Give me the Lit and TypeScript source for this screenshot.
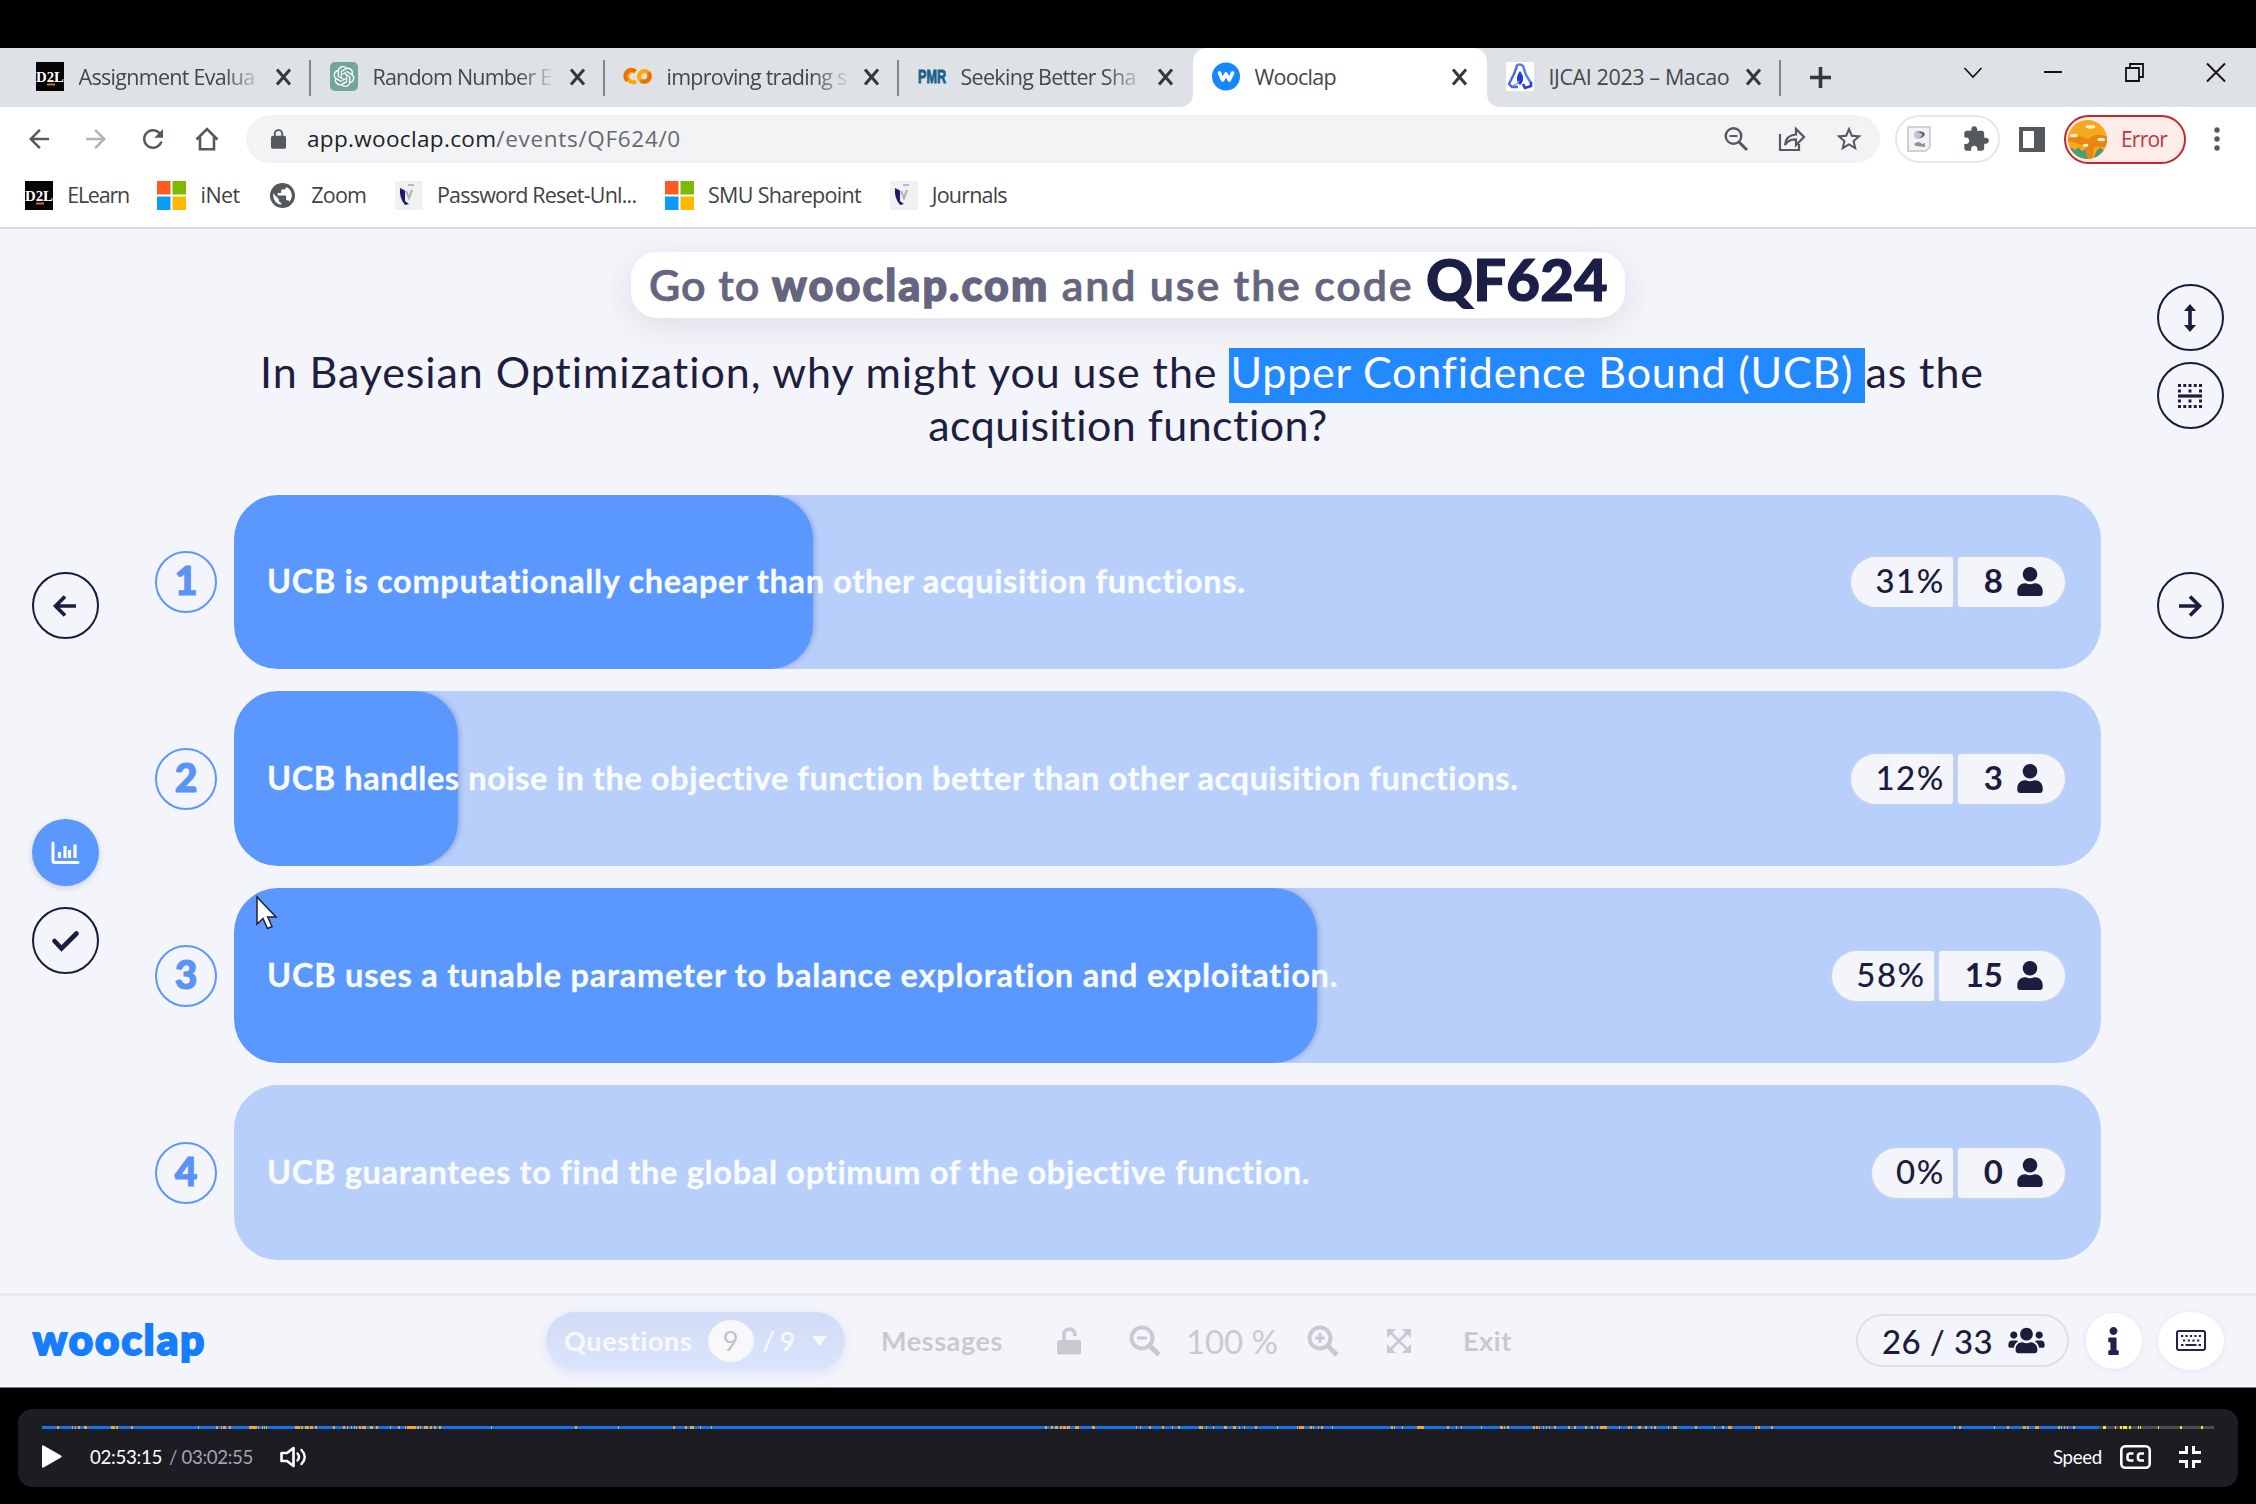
import { LitElement, html, css, svg } from "lit";
import { customElement } from "lit/decorators.js";
import { styleMap } from "lit/directives/style-map.js";

/* A label with its own letter tracking in px. */
const t = (text: string, tracking = 0, cls = "") => html`<span
    class="t ${cls}"
    style=${styleMap({ letterSpacing: `${tracking}px` })}
    >${text}</span
  >`;

const icon = (w: number, h: number, box: string, body: unknown) =>
  html`<svg class="icon" width=${w} height=${h} viewBox=${box}>${body}</svg>`;

const p = (d: string) => svg`<path fill="currentColor" d=${d}></path>`;

const line = (d: string, w: number) =>
  svg`<path fill="none" stroke="currentColor" stroke-width=${w} d=${d}></path>`;

const d2l = icon(28, 29, "0 0 28 29", svg`
  <rect width="28" height="29" fill="#050505"></rect>
  <text x="14" y="20" text-anchor="middle" font-family="Liberation Serif, serif" font-weight="700" font-size="15" textLength="28" lengthAdjust="spacingAndGlyphs" fill="#fff">D2L</text>
  <rect x="11" y="21.500" width="8" height="2" fill="#d9701f"></rect>`);

const knot = icon(28, 29, "0 0 28 29", svg`
  <rect width="28" height="29" rx="5" fill="#74a59c"></rect>
  <g transform="translate(3.500 4) scale(.875)" fill="#fff"><path d="M22.2819 9.8211a5.9847 5.9847 0 0 0-.5157-4.9108 6.0462 6.0462 0 0 0-6.5098-2.9A6.0651 6.0651 0 0 0 4.9807 4.1818a5.9847 5.9847 0 0 0-3.9977 2.9 6.0462 6.0462 0 0 0 .7427 7.0966 5.98 5.98 0 0 0 .511 4.9107 6.051 6.051 0 0 0 6.5146 2.9001A5.9847 5.9847 0 0 0 13.2599 24a6.0557 6.0557 0 0 0 5.7718-4.2058 5.9894 5.9894 0 0 0 3.9977-2.9001 6.0557 6.0557 0 0 0-.7475-7.0729zm-9.022 12.6081a4.4755 4.4755 0 0 1-2.8764-1.0408l.1419-.0804 4.7783-2.7582a.7948.7948 0 0 0 .3927-.6813v-6.7369l2.02 1.1686a.071.071 0 0 1 .038.052v5.5826a4.504 4.504 0 0 1-4.4945 4.4944zm-9.6607-4.1254a4.4708 4.4708 0 0 1-.5346-3.0137l.142.0852 4.783 2.7582a.7712.7712 0 0 0 .7806 0l5.8428-3.3685v2.3324a.0804.0804 0 0 1-.0332.0615L9.74 19.9502a4.4992 4.4992 0 0 1-6.1408-1.6464zM2.3408 7.8956a4.485 4.485 0 0 1 2.3655-1.9728V11.6a.7664.7664 0 0 0 .3879.6765l5.8144 3.3543-2.0201 1.1685a.0757.0757 0 0 1-.071 0l-4.8303-2.7865A4.504 4.504 0 0 1 2.3408 7.872zm16.5963 3.8558L13.1038 8.364 15.1192 7.2a.0757.0757 0 0 1 .071 0l4.8303 2.7913a4.4944 4.4944 0 0 1-.6765 8.1042v-5.6772a.79.79 0 0 0-.407-.667zm2.0107-3.0231l-.142-.0852-4.7735-2.7818a.7759.7759 0 0 0-.7854 0L9.409 9.2297V6.8974a.0662.0662 0 0 1 .0284-.0615l4.8303-2.7866a4.4992 4.4992 0 0 1 6.6802 4.66zM8.3065 12.863l-2.02-1.1638a.0804.0804 0 0 1-.038-.0567V6.0742a4.4992 4.4992 0 0 1 7.3757-3.4537l-.142.0805L8.704 5.459a.7948.7948 0 0 0-.3927.6813zm1.0976-2.3654l2.602-1.4998 2.6069 1.4998v2.9994l-2.5974 1.4997-2.6067-1.4997Z"></path></g>`);

const rings = icon(28, 29, "0 0 28 29", svg`
  <g fill="none" stroke-width="4.200">
    <circle cx="20.500" cy="14.500" r="5.400" stroke="#f9ab00"></circle>
    <path d="M12 9.800A5.600 5.600 0 1 0 12 19.200" stroke="#f9ab00"></path>
    <path d="M11.200 9.300A5.600 5.600 0 0 0 3.600 18.500" stroke="#e8710a"></path>
    <path d="M16.700 18.300A5.400 5.400 0 0 0 24.300 10.700" stroke="#e8710a"></path>
  </g>`);

const pmr = icon(28, 29, "0 0 28 29", svg`
  <text x="0" y="21" font-family="Liberation Sans, sans-serif" font-weight="700" font-size="18" textLength="28" lengthAdjust="spacingAndGlyphs" fill="#15608a" stroke="#15608a" stroke-width=".8">PMR</text>`);

const woo = icon(28, 29, "0 0 28 29", svg`
  <circle cx="14" cy="14.500" r="14" fill="#1687ff"></circle>
  <path d="M7.500 11l3.200 7 3.300-6 3.300 6 3.200-7" fill="none" stroke="#fff" stroke-width="3.600" stroke-linecap="round" stroke-linejoin="round"></path>`);

const ijcai = icon(28, 29, "0 0 28 29", svg`
  <rect width="28" height="29" fill="#fff"></rect>
  <path d="M11 4l-3 8-5 10 3 3h6" fill="none" stroke="#4a67e8" stroke-width="2.400"></path>
  <path d="M10 4q4-3 7 0l3 9 5 8" fill="none" stroke="#5b7bf0" stroke-width="2.400"></path>
  <path d="M25 20v4l-6 2-2-4" fill="none" stroke="#2440d8" stroke-width="2.600"></path>
  <path d="M14 9q5 6 2 12l-2 2-2-2q-3-6 2-12z" fill="#1a3fe0"></path>
  <path d="M6 24q5-1 7-5" fill="none" stroke="#7e95f3" stroke-width="1.600"></path>`);

const ms = icon(29, 29, "0 0 29 29", svg`
  <rect width="13.500" height="13.500" fill="#ff5a22"></rect>
  <rect x="15.500" width="13.500" height="13.500" fill="#7db900"></rect>
  <rect y="15.500" width="13.500" height="13.500" fill="#0b9cf5"></rect>
  <rect x="15.500" y="15.500" width="13.500" height="13.500" fill="#ffb800"></rect>`);

const globe = icon(29, 29, "0 0 24 24", svg`<g color="#55585c">${p("M12 2C6.48 2 2 6.48 2 12s4.480 10 10 10 10-4.480 10-10S17.520 2 12 2zm-1 17.930c-3.950-.49-7-3.850-7-7.930 0-.62.08-1.210.21-1.790L9 15v1c0 1.100.9 2 2 2v1.930zm6.900-2.540c-.26-.81-1-1.390-1.900-1.390h-1v-3c0-.55-.45-1-1-1H8v-2h2c.55 0 1-.45 1-1V7h2c1.100 0 2-.9 2-2v-.41c2.930 1.190 5 4.060 5 7.410 0 2.080-.8 3.970-2.100 5.390z")}${line("M12 3a9 9 0 1 0 .01 0", 2.6)}</g>`);

const crest = icon(28, 29, "0 0 28 29", svg`
  <rect width="28" height="29" fill="#f1f1f4"></rect>
  <path d="M5 7l5 2.500V20l4 3-4 1Q4 17 5 7z" fill="#1c1c6b"></path>
  <path d="M11 10l3 7 3-8" fill="none" stroke="#b4b4be" stroke-width="2.200"></path>
  <path d="M13 4h6" stroke="#b9b9c2" stroke-width="2"></path>`);

const tabs = [
  { icon: d2l, title: "Assignment Evalua", ls: -0.7 },
  { icon: knot, title: "Random Number E", ls: -0.8 },
  { icon: rings, title: "improving trading s", ls: -0.76 },
  { icon: pmr, title: "Seeking Better Sha", ls: -0.7 },
  { icon: woo, title: "Wooclap", ls: -0.75, active: true },
  { icon: ijcai, title: "IJCAI 2023 – Macao", ls: -0.4 },
];

const bookmarks = [
  { icon: d2l, title: "ELearn", ls: -1.25 },
  { icon: ms, title: "iNet", ls: -0.59 },
  { icon: globe, title: "Zoom", ls: -0.77 },
  { icon: crest, title: "Password Reset-Unl...", ls: -0.79 },
  { icon: ms, title: "SMU Sharepoint", ls: -0.68 },
  { icon: crest, title: "Journals", ls: -0.81 },
];

const answers = [
  { text: "UCB is computationally cheaper than other acquisition functions.", pct: 31, votes: 8, ls: 0.67 },
  { text: "UCB handles noise in the objective function better than other acquisition functions.", pct: 12, votes: 3, ls: 0.59 },
  { text: "UCB uses a tunable parameter to balance exploration and exploitation.", pct: 58, votes: 15, ls: 0.79 },
  { text: "UCB guarantees to find the global optimum of the objective function.", pct: 0, votes: 0, ls: 0.69 },
];

/* Timeline marks: [offset from the bar's start, width]. */
const marks: [number, number][] = [
  [15, 2], [30, 1], [33, 1], [35.500, 2], [42, 3], [69, 4], [74, 1.500], [89, 1.500], [156, 1], [174, 1.500], [179, 1], [181, 2.500], [187, 1.500],
  [207, 8], [216, 1], [220, 1], [222, 1], [224, 1], [253, 5], [259, 2], [263, 3.500], [268, 3], [273, 2], [291, 2], [301, 2], [305, 1], [309, 1], [311.500, 1.500], [314, 1],
  [317, 1.500], [320, 4], [328, 2.500], [334, 2], [348, 1], [356, 2], [363, 1], [365, 9], [375, 2], [378, 1], [382, 4], [388, 2], [392, 2], [397, 2],
  [449, 1], [533, 2], [576, 1], [631, 2], [643, 2], [648, 4], [658, 1], [669, 1],
  [1003, 2], [1009, 2], [1013, 3], [1018, 2], [1021, 3], [1025, 3], [1033, 4], [1050, 3], [1094, 1], [1098, 1], [1107, 2], [1120, 2], [1130, 1], [1136, 2], [1157, 4], [1164, 1], [1171, 1], [1182, 3], [1191, 3], [1197, 1], [1202, 1], [1213, 2], [1235, 1], [1255, 1], [1257, 5], [1268, 2], [1271, 1], [1276, 1], [1279, 2], [1290, 1],
  [1349, 2], [1352, 1], [1360, 1], [1375, 7], [1405, 2], [1414, 1], [1419, 1], [1439, 1], [1458, 3], [1462, 1], [1465, 2], [1491, 2], [1494, 2], [1497, 1], [1501, 1], [1504, 1], [1507, 1], [1512, 2],
  [1526, 2], [1532, 2], [1543, 2], [1549, 1.500], [1555, 1], [1558, 7], [1577, 1], [1586, 1.500], [1588.500, 1.500], [1596, 3], [1603, 2], [1609, 1], [1612, 2], [1626, 1], [1631, 3.500], [1653, 2], [1672, 1], [1680, 1.500], [1686, 4],
  [1713, 2], [1716, 2], [1729, 2], [1912, 1], [1917, 2], [1952, 1], [1965, 2], [1981, 3], [1985, 2], [1993, 4], [2016, 2], [2019, 1], [2022, 1], [2025, 1], [2031, 2],
];
const ahead: [number, number][] = [
  [2061, 3], [2073, 1], [2078, 2], [2081, 4], [2087, 2], [2096, 1], [2098, 1], [2116, 1], [2138, 2], [2159, 2],
];

@customElement("app-root")
export class AppRoot extends LitElement {
  static styles = css`
    :host { display: block; width: 2256px; height: 1504px; background: #000; overflow: hidden; padding-top: 48px; box-sizing: border-box; font-family: Lato, "Liberation Sans", sans-serif; color: #1b1c3e; }
    * { box-sizing: border-box; }
    .icon { display: block; flex: none; overflow: visible; }
    .t { white-space: pre; display: inline-block; }
    .screen { height: 1340px; background: #f4f5fa; border-bottom: 1px solid #77807b; }
    .browser { height: 181px; background: #fff; border-bottom: 2px solid #d9dbdf; font-family: "Open Sans", "Noto Sans", sans-serif; font-size: 21.5px; color: #44474b; }
    .tabs { height: 59px; background: #dee1e6; padding-left: 17px; display: flex; }
    .tab { width: 294px; height: 59px; padding: 0 19.5px 2px 18.5px; display: flex; align-items: center; position: relative; }
    .title { width: 182px; margin-left: 15px; margin-right: 15px; white-space: nowrap; line-height: 40px; mask-image: linear-gradient(to right, #000 80%, transparent 101%); }
    .plain .title { mask-image: none; }
    .tab.sep::after { content: ""; position: absolute; right: 0; top: 12px; width: 2px; height: 36px; background: #84878c; }
    .active { background: #fff; border-radius: 14px 14px 0 0; color: #44474b; }
    .active::before, .active::after { content: ""; position: absolute; bottom: 0; width: 12px; height: 12px; }
    .tab.active::before { left: -12px; background: radial-gradient(circle at 0 0, transparent 11.5px, #fff 12px); }
    .tab.active::after { right: -12px; background: radial-gradient(circle at 100% 0, transparent 11.5px, #fff 12px); }
    .x { color: #34373b; }
    .plus { margin: 19px 0 0 29px; color: #34373b; }
    .win { display: flex; align-items: center; height: 48px; margin-left: auto; color: #111; padding-right: 30px; gap: 62.4px; }
    .tools { height: 64px; display: flex; align-items: center; color: #55585c; padding-left: 24px; }
    .tools > .icon { margin-right: 27px; }
    .address { width: 1634px; height: 48px; border-radius: 24px; background: #f1f3f4; display: flex; align-items: center; padding: 0 16px 0 25px; font-size: 22.5px; }
    .address .url { margin-left: 21px; flex: 1; display: flex; line-height: 40px; }
    .address .host { color: #202226; }
    .address .path { color: #67696d; }
    .address .end { display: flex; gap: 28px; align-items: center; }
    .ext { margin-left: 15px; width: 105px; height: 48px; border: 2px solid #e6e7ea; border-radius: 24px; display: flex; align-items: center; justify-content: space-between; padding: 0 8px 0 10px; }
    .tools > .panel { margin-right: 19px; margin-left: 19px; }
    .error { width: 122px; height: 49px; border: 2px solid #c5282c; background: #fdecea; border-radius: 25px; display: flex; align-items: center; color: #c1353c; gap: 14px; padding-left: 2px; line-height: 40px; font-size: 21px; }
    .tools > .dots { margin: 0 0 0 28px; }
    .marks { display: flex; padding-left: 25px; height: 48px; align-items: center; gap: 28.5px; }
    .mark { display: flex; align-items: center; gap: 14.2px; line-height: 40px; color: #3f4246; }

    .stage { height: 1064px; display: grid; grid-template-columns: 132px 1992px 132px; }
    .side { display: flex; flex-direction: column; align-items: center; }
    .left { padding-top: 343px; padding-right: 2px; }
    .right { padding-top: 55px; }
    .round { width: 67px; height: 67px; flex: none; border: 2.5px solid #191b3b; border-radius: 50%; display: flex; align-items: center; justify-content: center; }
    .stats { margin-top: 180px; margin-bottom: 21px; border: none; background: #5a97ff; color: #fff; box-shadow: 0 2px 6px rgba(40, 60, 110, 0.2); }
    .rows { margin-top: 11px; margin-bottom: 143px; }
    .middle { display: flex; flex-direction: column; align-items: center; }
    .join { margin-top: 23px; width: 994px; height: 66px; line-height: 65px; padding-left: 18px; border-radius: 26px; background: #fff; box-shadow: 0 8px 34px rgba(50, 50, 80, 0.11); font-size: 43px; font-weight: 600; color: #65657f; white-space: nowrap; -webkit-text-stroke: 0.7px #65657f; }
    .join .site { font-weight: 900; -webkit-text-stroke: 1.4px #65657f; }
    .join .code { font-size: 58px; line-height: 0; font-weight: 900; color: #1b1f48; -webkit-text-stroke: 1.2px #1b1f48; }
    .question { margin-top: 27px; height: 106px; font-size: 43px; line-height: 53px; text-align: center; white-space: nowrap; color: #1d1e40; }
    .question .first { margin-right: 12px; }
    .hl { color: #fff; background: linear-gradient(#2389ff, #2389ff) bottom / 100% 55px no-repeat; padding: 0 12px 6px 1px; letter-spacing: 0.82px; }
    .answers { margin-top: 43.5px; align-self: stretch; padding: 0 23px; display: flex; flex-direction: column; gap: 22.4px; }
    .answer { display: flex; align-items: center; gap: 17px; }
    .num { width: 62px; height: 62px; border: 2px solid #5a97ff; border-radius: 50%; color: #5a93f5; font-weight: 900; font-size: 39px; line-height: 55px; text-align: center; flex: none; -webkit-text-stroke: 1.2px #5a93f5; }
    .bar { width: 1867px; height: 174.6px; border-radius: 44px; background: #b8cffc; overflow: hidden; display: grid; }
    .bar > * { grid-area: 1 / 1; }
    .fill { background: #5a97ff; border-radius: 44px; box-shadow: 2px 0 5px rgba(60, 90, 150, 0.3); }
    .body { z-index: 1; display: flex; align-items: center; justify-content: space-between; padding: 0 36px 0 33px; font-size: 32.5px; font-weight: 700; color: #f8fcff; -webkit-text-stroke: 0.3px #f8fcff; }
    .body > .t { margin-top: -3px; }
    .chips { display: flex; gap: 5px; color: #1b1c3e; line-height: 47px; font-size: 33px; -webkit-text-stroke: 0; }
    .chip { height: 50px; background: #f4f5fa; box-shadow: 0 0 3px rgba(230, 220, 210, 0.8); display: flex; align-items: center; }
    .pct { border-radius: 25px 3px 3px 25px; padding: 0 8px 3px 24px; font-weight: 500; }
    .cnt { border-radius: 3px 25px 25px 3px; padding: 0 22px 0 26px; gap: 14px; font-weight: 700; }
    .cnt .t { margin-top: -3px; }

    .footer { height: 94px; border-top: 3px solid #e9eaee; padding: 0 32px 2px 33px; display: flex; align-items: center; color: #c9cad1; font-weight: 700; font-size: 27px; }
    .logo { color: #167dff; font-size: 42px; font-weight: 900; width: 172px; line-height: 50px; margin-top: -4px; -webkit-text-stroke: 2.2px #167dff; stroke-linejoin: round; }
    .footer .questions { margin-left: 341px; width: 299px; height: 58px; border-radius: 29px; background: linear-gradient(#d3dcf6, #dae4fc); box-shadow: 0 3px 12px rgba(170, 195, 250, 0.35); color: #f7f9ff; display: flex; align-items: center; padding-left: 18px; }
    .badge { width: 46px; height: 42px; border-radius: 50%; background: #f8f8fa; color: #c2c3c9; font-weight: 400; text-align: center; line-height: 41px; margin: 0 9px 0 15px; }
    .total { font-weight: 500; }
    .caret { margin-left: 17px; }
    .g { flex: none; display: flex; }
    .messages { margin-left: 36px; }
    .lock { margin-left: 54px; }
    .minus { margin-left: 48px; }
    .zoomed { margin-left: 25px; font-weight: 400; font-size: 33px; }
    .more { margin-left: 29px; }
    .expand { margin-left: 48px; }
    .exit { margin-left: 52px; }
    .people { margin-left: auto; width: 213px; height: 53px; border: 2px solid #dfe0e5; border-radius: 27px; color: #1b1c3e; font-weight: 500; font-size: 33px; display: flex; align-items: center; gap: 15px; padding-left: 24px; line-height: 46px; }
    .dot { width: 56px; height: 56px; border-radius: 50%; background: #fff; color: #20234b; display: flex; align-items: center; justify-content: center; margin-left: 16.5px; box-shadow: 0 1px 6px rgba(60, 70, 90, 0.09); }
    .wide { width: 66px; height: 58px; margin-left: 16.5px; }

    .player { margin: 21px 18px 0; height: 78px; border-radius: 14px; background: #1c1c22; padding: 17px 24px 0; color: #fff; font-size: 18.7px; }
    .track { position: relative; height: 3px; background: #4b4b52; }
    .played { height: 3px; width: 2057px; background: #1472ea; }
    .mk { position: absolute; top: 0; height: 3px; background: #f5a52a; }
    .mk.next { background: #f4ee14; }
    .controls { display: flex; align-items: center; height: 55px; padding-right: 13px; }
    .now { margin-left: 28px; }
    .dim { color: #a5a3b5; margin-left: 7px; }
    .speaker { margin-left: 27px; }
    .speed { margin-left: auto; }
    .cc { margin-left: 18px; }
    .shrink { margin-left: 28px; }
    .cursor { position: absolute; left: 256px; top: 896px; }
  `;

  private tab(x: (typeof tabs)[number], i: number) {
    const sep = i !== 3 && i !== 4;
    return html`<div class="tab ${x.active ? "active" : ""} ${sep ? "sep" : ""} ${i > 3 ? "plain" : ""}">
      ${x.icon}
      <div class="title">${t(x.title, x.ls)}</div>
      <span class="x">${icon(15, 18, "0 0 15 18", line("M1 1.500l13 15M14 1.500L1 16.500", 3))}</span>
    </div>`;
  }

  render() {
    return html`
      <div class="screen">
        <div class="browser">
          <div class="tabs">
            ${tabs.map((x, i) => this.tab(x, i))}
            <span class="plus">${icon(21, 21, "0 0 21 21", line("M10.500 0v21M0 10.500h21", 3.600))}</span>
            <div class="win">
              ${icon(18, 11, "0 0 18 11", line("M.5 1L9 10l8.500-9", 1.600))}
              ${icon(18, 2, "0 0 18 2", line("M0 1h18", 2))}
              ${icon(19, 19, "0 0 19 19", line("M1 5h13v13H1zM5 5V1h13v13h-4", 1.800))}
              ${icon(20, 19, "0 0 20 19", line("M1 .5l18 18M19 .5l-18 18", 1.800))}
            </div>
          </div>
          <div class="tools">
            ${icon(30, 30, "0 0 24 24", p("M20 11H7.830l5.590-5.590L12 4l-8 8 8 8 1.410-1.410L7.830 13H20v-2z"))}
            <svg class="icon" width="30" height="30" viewBox="0 0 24 24" opacity=".45"><path fill="currentColor" d="M4 11h12.170l-5.590-5.590L12 4l8 8-8 8-1.410-1.410L16.170 13H4z"></path></svg>
            ${icon(30, 30, "0 0 24 24", p("M17.650 6.350C16.200 4.900 14.210 4 12 4c-4.420 0-7.990 3.580-7.990 8s3.570 8 7.990 8c3.730 0 6.840-2.550 7.730-6h-2.080c-.82 2.330-3.040 4-5.650 4-3.310 0-6-2.690-6-6s2.690-6 6-6c1.660 0 3.140.69 4.220 1.780L13 11h7V4l-2.350 2.350z"))}
            ${icon(24, 24, "0 0 24 24", line("M1.500 12.500L12 2l10.500 10.500M5 10v12.300h14V10", 2.600))}
            <div class="address">
              ${icon(15, 20, "4 1 16 21", svg`${p("M6 8h12q2 0 2 2v10q0 2-2 2H6q-2 0-2-2V10q0-2 2-2z")}${line("M8 9V6a4 4 0 0 1 8 0v3", 2)}`)}
              <div class="url">${t("app.wooclap.com", 0.34, "host")}${t("/events/QF624/0", 0.68, "path")}</div>
              <div class="end">
                ${icon(28, 28, "0 0 28 28", svg`<circle cx="11.500" cy="11" r="7.800" fill="none" stroke="currentColor" stroke-width="2.400"></circle>${line("M17 17l8 8", 3)}${line("M7.500 11h8", 2)}`)}
                ${icon(28, 28, "0 0 28 28", svg`${line("M2 9v16h19v-6", 2.200)}${line("M7 20q1-10 11-10.500V4l8 8-8 8v-5.500q-7-.5-11 5.500z", 2.200)}`)}
                ${icon(30, 30, "0 0 24 24", p("M22 9.240l-7.190-.62L12 2 9.190 8.630 2 9.240l5.460 4.730L5.820 21 12 17.270 18.180 21l-1.630-7.030L22 9.240zM12 15.400l-3.760 2.270 1-4.280-3.320-2.880 4.380-.38L12 6.100l1.710 4.040 4.380.38-3.320 2.880 1 4.280L12 15.400z"))}
              </div>
            </div>
            <div class="ext">
              ${icon(24, 26, "0 0 24 26", svg`<path d="M1 1h22v20l-4 4H1z" fill="#f3f3f6" stroke="#c4c5cc" stroke-width="1.500"></path><circle cx="11" cy="9" r="4" fill="#c3c4d0"></circle><path d="M10 6q6-2 8 2-1 4-6 4 4-2 3-4-2-2-5-2z" fill="#5f6072"></path><path d="M7 18q5-4 8 0l3-1v4l-9-1z" fill="#8f90a0"></path>`)}
              ${icon(28, 28, "0 0 24 24", p("M20.500 11H19V7c0-1.100-.9-2-2-2h-4V3.500C13 2.120 11.880 1 10.500 1S8 2.120 8 3.500V5H4c-1.100 0-1.990.9-1.990 2v3.800H3.500c1.490 0 2.700 1.210 2.700 2.700s-1.210 2.700-2.700 2.700H2V20c0 1.100.9 2 2 2h3.800v-1.500c0-1.490 1.210-2.700 2.700-2.700 1.490 0 2.700 1.210 2.700 2.700V22H17c1.100 0 2-.9 2-2v-4h1.500c1.380 0 2.500-1.120 2.500-2.500S21.880 11 20.500 11z"))}
            </div>
            <svg class="icon panel" width="26" height="25" viewBox="0 0 26 25"><path fill="currentColor" fill-rule="evenodd" d="M0 0h26v25H0zM4 4h11v17H4z"></path></svg>
            <div class="error">
              ${icon(39, 39, "0 0 40 40", svg`
                <clipPath id="av"><circle cx="20" cy="20" r="20"></circle></clipPath>
                <g clip-path="url(#av)"><rect width="40" height="40" fill="#f8a81b"></rect>
                <path d="M0 19q12-5 20 1 9-8 20-3v11q-8-1-13 0l-2 12h-9l2-12Q8 22 0 22z" fill="#e88613"></path>
                <path d="M0 31l4-3 3 3 4-3 3 4 4-2 2 10H0zM40 29l-4 2-3-3-4 4-3 8h14z" fill="#4c9e78"></path>
                <ellipse cx="23" cy="7" rx="5" ry="2" fill="#fff0cf"></ellipse><ellipse cx="6" cy="16" rx="4" ry="1.800" fill="#fff0cf"></ellipse><ellipse cx="34" cy="20" rx="4" ry="1.800" fill="#fff0cf"></ellipse><ellipse cx="18" cy="26" rx="3" ry="1.600" fill="#fff0cf"></ellipse></g>`)}
              ${t("Error", -0.81)}
            </div>
            <svg class="icon dots" width="6" height="24" viewBox="0 0 6 24"><g fill="currentColor"><circle cx="3" cy="3" r="2.700"></circle><circle cx="3" cy="12" r="2.700"></circle><circle cx="3" cy="21" r="2.700"></circle></g></svg>
          </div>
          <div class="marks">${bookmarks.map((b) => html`<div class="mark">${b.icon}${t(b.title, b.ls)}</div>`)}</div>
        </div>

        <div class="stage">
          <div class="side left">
            <div class="round">${icon(24, 22, "0 0 24 22", line("M12 1.500L2.500 11l9.500 9.500M2.500 11H23", 3.600))}</div>
            <div class="round stats">${icon(28, 22, "0 0 28 22", svg`<path d="M2 1v18q0 1.500 1.500 1.500H27" fill="none" stroke="#fff" stroke-width="3" stroke-linecap="round"></path><path d="M8.500 10v6M14 4v12M18.500 8v8M24 2.500v13.500" stroke="#fff" stroke-width="3.200"></path>`)}</div>
            <div class="round">${icon(27, 20, "0 0 27 20", svg`<path d="M2.500 10l7 7.500L24.500 2.500" fill="none" stroke="currentColor" stroke-width="4.600" stroke-linecap="round"></path>`)}</div>
          </div>
          <div class="middle">
            <div class="join">${t("Go to ", 0.98)}${t("wooclap.com", 2.1, "site")}${t(" and use the code ", 1.83)}${t("QF624", 0.2, "code")}</div>
            <div class="question">
              <div class="first">${t("In Bayesian Optimization, why might you use the ", 0.92)}<span class="hl">Upper Confidence Bound (UCB)</span>${t("as the", 0.9)}</div>
              <div>${t("acquisition function?", 0.45)}</div>
            </div>
            <div class="answers">
              ${answers.map(
                (a, i) => html`<div class="answer">
                  <div class="num">${i + 1}</div>
                  <div class="bar">
                    <div class="fill" style=${styleMap({ width: `${a.pct}%` })}></div>
                    <div class="body">
                      ${t(a.text, a.ls)}
                      <div class="chips">
                        <div class="chip pct">${t(`${a.pct}%`, 1.5)}</div>
                        <div class="chip cnt">${t(`${a.votes}`)}${icon(26, 29, "0 0 448 512", p("M224 256c70.700 0 128-57.300 128-128S294.700 0 224 0 96 57.300 96 128s57.300 128 128 128zm89.600 32h-16.700c-22.200 10.200-46.900 16-72.900 16s-50.600-5.800-72.900-16h-16.700C60.200 288 0 348.200 0 422.400V464c0 26.500 21.500 48 48 48h352c26.500 0 48-21.500 48-48v-41.600c0-74.200-60.200-134.400-134.400-134.400z"))}</div>
                      </div>
                    </div>
                  </div>
                </div>`
              )}
            </div>
          </div>
          <div class="side right">
            <div class="round">${icon(14, 28, "0 0 14 28", svg`${line("M7 5v18", 3.600)}${p("M7 0l6 7H1zM7 28l-6-7h12z")}`)}</div>
            <div class="round rows">${icon(24, 24, "0 0 24 24", svg`<path d="M0 1.500h24M0 22.500h24" stroke="currentColor" stroke-width="3" stroke-dasharray="3 2.250"></path><path d="M0 7h3M10.500 7h3M21 7h3M0 17h3M10.500 17h3M21 17h3" stroke="currentColor" stroke-width="3"></path><path d="M0 12h24" stroke="currentColor" stroke-width="3.200"></path>`)}</div>
            <div class="round">${icon(24, 22, "0 0 24 22", line("M12 1.500l9.500 9.500-9.500 9.500M21.500 11H1", 3.600))}</div>
          </div>
        </div>

        <div class="footer">
          <div class="logo">${t("wooclap", 2.1)}</div>
          <div class="questions">${t("Questions", 0.65)}<span class="badge">9</span>${t("/ 9", -0.93, "total")}<span class="caret">${icon(15, 10, "0 0 15 10", p("M0 0h15L7.500 10z"))}</span></div>
          <span class="g messages">${t("Messages", 0.59)}</span>
          <span class="g lock">${icon(24, 28, "0 0 24 28", svg`<rect y="13" width="24" height="14.500" rx="2.500" fill="currentColor"></rect>${line("M7 14V7.500a5 5 0 0 1 11 0V9", 3.600)}`)}</span>
          <span class="g minus">${icon(32, 32, "0 0 32 32", svg`<circle cx="13" cy="13" r="10.500" fill="none" stroke="currentColor" stroke-width="4"></circle>${line("M20.500 20.500l9.500 9.500", 5)}${line("M8 13h10", 3)}`)}</span>
          <span class="g zoomed">${t("100 %", -0.07)}</span>
          <span class="g more">${icon(32, 32, "0 0 32 32", svg`<circle cx="13" cy="13" r="10.500" fill="none" stroke="currentColor" stroke-width="4"></circle>${line("M20.500 20.500l9.500 9.500", 5)}${line("M8 13h10M13 8v10", 3)}`)}</span>
          <span class="g expand">${icon(24, 24, "0 0 24 24", svg`${line("M4 4l16 16M20 4L4 20", 2.800)}${p("M0 0h9L0 9zM24 0v9l-9-9zM0 24v-9l9 9zM24 24h-9l9-9z")}`)}</span>
          <span class="g exit">${t("Exit", 0.62)}</span>
          <div class="people">${t("26 / 33", 0.39)}${icon(37, 29, "0 0 640 512", p("M96 224c35.300 0 64-28.700 64-64s-28.700-64-64-64-64 28.700-64 64 28.700 64 64 64zm448 0c35.300 0 64-28.700 64-64s-28.700-64-64-64-64 28.700-64 64 28.700 64 64 64zm32 32h-64c-17.600 0-33.500 7.100-45.100 18.600 40.300 22.100 68.900 62 75.100 109.400h66c17.700 0 32-14.300 32-32v-32c0-35.300-28.700-64-64-64zm-256 0c61.900 0 112-50.100 112-112S381.900 32 320 32 208 82.100 208 144s50.100 112 112 112zm76.800 32h-8.300c-20.800 10-43.900 16-68.500 16s-47.600-6-68.500-16h-8.300C179.600 288 128 339.600 128 403.200V432c0 26.500 21.500 48 48 48h288c26.500 0 48-21.500 48-48v-28.800c0-63.600-51.600-115.200-115.200-115.200zm-223.700-13.400C161.500 263.100 145.600 256 128 256H64c-35.300 0-64 28.700-64 64v32c0 17.700 14.300 32 32 32h65.900c6.300-47.400 34.900-87.300 75.200-109.400z"))}</div>
          <div class="dot">${icon(11, 28, "0 0 192 512", p("M20 424.229h20V279.771H20c-11.046 0-20-8.954-20-20V212c0-11.046 8.954-20 20-20h112c11.046 0 20 8.954 20 20v212.229h20c11.046 0 20 8.954 20 20V492c0 11.046-8.954 20-20 20H20c-11.046 0-20-8.954-20-20v-47.771c0-11.046 8.954-20 20-20zM96 0C56.235 0 24 32.235 24 72s32.235 72 72 72 72-32.235 72-72S135.764 0 96 0z"))}</div>
          <div class="dot wide">${icon(30, 21, "0 0 30 21", svg`<rect x="1" y="1" width="28" height="19" rx="2" fill="none" stroke="currentColor" stroke-width="2"></rect><path d="M5 6h20" stroke="currentColor" stroke-width="2.200" stroke-dasharray="2.200 2.250"></path><path d="M7 10.500h17" stroke="currentColor" stroke-width="2.200" stroke-dasharray="2.200 2.500"></path><path d="M5 15h2.500M9.500 15h11M22.500 15H25" stroke="currentColor" stroke-width="2.200"></path>`)}</div>
        </div>
      </div>

      <div class="player">
        <div class="track">
          <div class="played"></div>
          ${marks.map(([x, w]) => html`<i class="mk" style=${styleMap({ left: `${x}px`, width: `${w}px` })}></i>`)}
          ${ahead.map(([x, w]) => html`<i class="mk next" style=${styleMap({ left: `${x}px`, width: `${w}px` })}></i>`)}
        </div>
        <div class="controls">
          ${icon(20, 23, "0 0 20 23", p("M0 1.500Q0-.5 2 .7L19 10.500q1.500 1 0 2L2 22.300Q0 23.500 0 21.500z"))}
          <span class="g now">${t("02:53:15", -0.3)}</span>
          <span class="g dim">${t("/ 03:02:55", -0.36)}</span>
          <span class="g speaker">${icon(27, 22, "0 0 27 22", svg`<path d="M1.500 7v8h5.500l6.500 5V2L7 7z" fill="none" stroke="currentColor" stroke-width="2.600" stroke-linejoin="round"></path><path d="M17.500 7.500q3 3.500 0 7M21.500 4q6.500 7 0 14" fill="none" stroke="currentColor" stroke-width="2.400" stroke-linecap="round"></path>`)}</span>
          <span class="g speed">${t("Speed", -0.32)}</span>
          <span class="g cc">${icon(31, 24, "0 0 31 24", svg`<rect x="1.300" y="1.300" width="28.400" height="21.400" rx="4" fill="none" stroke="currentColor" stroke-width="2.600"></rect><path d="M13.500 8.500H10q-2.500 0-2.500 2.500v2q0 2.500 2.500 2.500h3.500M24 8.500h-3.500q-2.500 0-2.500 2.500v2q0 2.500 2.500 2.500H24" fill="none" stroke="currentColor" stroke-width="2.600"></path>`)}</span>
          <span class="g shrink">${icon(22, 22, "0 0 22 22", line("M7.500 0v6.500H0M14.500 0v6.500H22M7.500 22v-6.500H0M14.500 22v-6.500H22", 3))}</span>
        </div>
      </div>
      <svg class="icon cursor" width="22" height="34" viewBox="0 0 22 34"><path d="M1 1v27l6-5.500 4.500 10 4.500-2-4.300-9.500H20z" fill="#fff" stroke="#223" stroke-width="1.500"></path></svg>
    `;
  }
}
